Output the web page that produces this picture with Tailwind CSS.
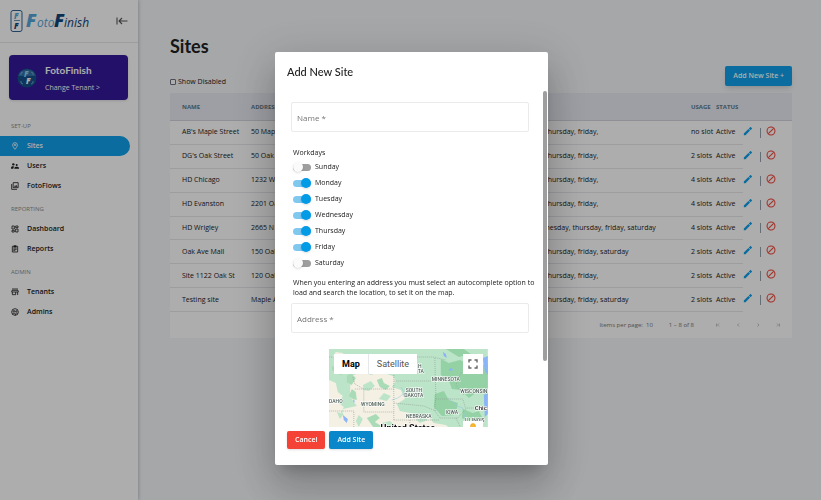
<!DOCTYPE html>
<html lang="en">
<head>
  <meta charset="UTF-8">
  <meta name="viewport" content="width=device-width, initial-scale=1">
  <title>FotoFinish - Sites</title>
  <script src="https://cdn.jsdelivr.net/npm/@tailwindcss/browser@4"></script>
</head>
<body class="min-h-screen flex bg-[#f3f6f9] font-['Open_Sans','Noto_Sans',sans-serif] text-[7px] leading-[10px] text-[#212121]">

  <!-- Sidebar -->
  <aside class="w-[138px] shrink-0 bg-white shadow-[0_0_4px_rgba(0,0,0,0.3)]">
    <header class="h-[43px] flex items-center justify-between pl-[10px] pr-[10px] border-b border-gray-200">
      <svg class="w-20 h-6" viewBox="0 0 80 24" aria-label="FotoFinish">
        <rect x="1" y="1.500" width="11" height="21" rx="2" fill="none" stroke="#2d6496" stroke-width="1"/>
        <g font-family="Open Sans" font-style="italic">
          <text x="4" y="10" font-size="8" font-weight="800" fill="#56a5d6">F</text>
          <text x="4" y="20" font-size="8" font-weight="800" fill="#12457a">F</text>
          <path d="M4 11.500h6" stroke="#2d6496" stroke-width=".7"/>
          <text x="16" y="18" font-size="18" font-weight="800" fill="#56a5d6">F</text>
          <text x="27" y="18" font-size="12" fill="#56a5d6">oto</text>
          <text x="44" y="18" font-size="18" font-weight="800" fill="#12457a">F</text>
          <text x="54" y="18" font-size="12" fill="#12457a">inish</text>
        </g>
      </svg>
      <button type="button" aria-label="Collapse menu">
        <svg class="w-3 h-3" viewBox="0 0 12 12" fill="none" stroke="#555" stroke-width="1.100"><path d="M1 2.500v7M11.500 6H3.500M6 3 3 6l3 3"/></svg>
      </button>
    </header>

    <section class="mt-3 mx-[9px] mr-[10px] h-[45px] flex items-center gap-2 pl-2 rounded-sm bg-[#34189a] text-white shadow-sm">
      <svg class="w-5 h-5" viewBox="0 0 20 20">
        <circle cx="10" cy="10" r="9.500" fill="#16508a"/>
        <path d="M1 8a9.500 9.500 0 0 1 18 0z" fill="#316fa5"/>
        <path d="M4 7V5l2-1M14 4l2 1v2M4 13v2l2 1M14 16l2-1v-2" stroke="#79b6d8" stroke-width=".8" fill="none"/>
        <g font-family="Open Sans" font-weight="800" font-style="italic" font-size="8">
          <text x="7" y="9" fill="#8ed0f2">F</text>
          <text x="9" y="16" fill="#fff">F</text>
        </g>
      </svg>
      <div>
        <h2 class="font-['Lato',sans-serif] text-[10px] leading-4 font-bold">FotoFinish</h2>
        <a href="#" class="block mt-1 leading-3 font-medium">Change Tenant &gt;</a>
      </div>
    </section>

    <nav class="pt-5">
      <h3 class="h-4 pl-[11px] pt-px text-[6px] text-[#8b8b8b]">SET-UP</h3>
      <a href="#" class="h-5 mr-2 pl-[11px] flex items-center gap-2 rounded-r-full bg-[#0f9fea] text-white font-semibold">
        <svg class="w-2 h-2" viewBox="0 0 24 24" fill="none" stroke="currentColor" stroke-width="2.500"><path d="M12 2a7 7 0 0 0-7 7c0 5 7 13 7 13s7-8 7-13a7 7 0 0 0-7-7z"/><circle cx="12" cy="9" r="2"/></svg>
        Sites
      </a>
      <a href="#" class="h-5 pl-[11px] flex items-center gap-2 font-semibold">
        <svg class="w-2 h-2" viewBox="0 0 24 24" fill="currentColor"><circle cx="7" cy="7" r="3.500"/><circle cx="17" cy="9" r="3"/><path d="M0 20v-3c0-3 4-4 7-4l3 1c-3 2-3 3-3 6zM10 20v-2c0-3 4-4 7-4s7 1 7 4v2z"/></svg>
        Users
      </a>
      <a href="#" class="h-5 pl-[11px] flex items-center gap-2 font-semibold">
        <svg class="w-2 h-2" viewBox="0 0 24 24" fill="none" stroke="currentColor" stroke-width="2.500"><path d="M2 6v16h16M6.500 2h15v15h-15z"/><path d="m9 14 3-4 2 2 2-3 4 5z" fill="currentColor" stroke="none"/></svg>
        FotoFlows
      </a>
      <h3 class="h-[23px] pl-[11px] pt-2 text-[6px] text-[#8b8b8b]">REPORTING</h3>
      <a href="#" class="h-5 pl-[11px] flex items-center gap-2 font-semibold">
        <svg class="w-2 h-2" viewBox="0 0 24 24" fill="none" stroke="currentColor" stroke-width="2.500"><path d="M3 3h7v9H3zM14 3h7v5h-7zM14 12h7v9h-7zM3 16h7v5H3z"/></svg>
        Dashboard
      </a>
      <a href="#" class="h-5 pl-[11px] flex items-center gap-2 font-semibold">
        <svg class="w-2 h-2" viewBox="0 0 24 24" fill="none" stroke="currentColor" stroke-width="2.500"><path d="M4 4h16v17H4zM7 9h10M7 13h10M7 17h6"/><path d="M8 1h8v6H8z" fill="currentColor" stroke="none"/></svg>
        Reports
      </a>
      <h3 class="h-[23px] pl-[11px] pt-2 text-[6px] text-[#8b8b8b]">ADMIN</h3>
      <a href="#" class="h-5 pl-[11px] flex items-center gap-2 font-semibold">
        <svg class="w-2 h-2" viewBox="0 0 24 24" fill="none" stroke="currentColor" stroke-width="2.500"><path d="M3 3h18M3 7h18l1 5H2zM4 12v8h10v-8M20 12v9"/></svg>
        Tenants
      </a>
      <a href="#" class="h-5 pl-[11px] flex items-center gap-2 font-semibold">
        <svg class="w-2 h-2" viewBox="0 0 24 24" fill="none" stroke="currentColor" stroke-width="2.500"><circle cx="12" cy="12" r="10"/><circle cx="9" cy="10" r="2.500"/><circle cx="16" cy="10" r="2"/><path d="M4 18c2-3 7-3 9 0v4M13 16c2-1 5-1 7 1"/></svg>
        Admins
      </a>
    </nav>
  </aside>

  <!-- Sites list -->
  <main class="flex-1 min-w-0 pl-8 pr-[29px] pt-[34px]">
    <h1 class="font-['Lato',sans-serif] text-[18px] leading-6 font-bold">Sites</h1>
    <div class="mt-2 flex items-end justify-between">
      <label class="flex items-center gap-[2px] leading-3 -mb-[2px]">
        <input type="checkbox" class="appearance-none w-[6px] h-[6px] rounded-[1px] border border-gray-500 bg-white">
        Show Disabled
      </label>
      <button type="button" class="h-5 px-2 rounded-xs bg-[#0f9fea] text-white font-semibold shadow-md">Add New Site +</button>
    </div>

    <div class="mt-[7px] bg-white pb-2">
      <table class="w-full h-[219px] table-fixed border-separate border-spacing-0 text-left whitespace-nowrap">
        <colgroup>
          <col class="w-[81px]"><col class="w-[194px]"><col><col class="w-[25px]"><col class="w-[27px]"><col class="w-[49px]">
        </colgroup>
        <thead class="bg-[#e8ebf3] text-[6px] text-[#5d7a89]">
          <tr class="h-7">
            <th class="pl-3 border-b border-gray-300">NAME</th>
            <th class="border-b border-gray-300">ADDRESS</th>
            <th class="border-b border-gray-300">WORKDAYS</th>
            <th class="border-b border-gray-300">USAGE</th>
            <th class="border-b border-gray-300">STATUS</th>
            <th class="border-b border-gray-300" aria-label="Actions"></th>
          </tr>
        </thead>
        <tbody id="sites"></tbody>
      </table>
      <footer class="mt-2 mr-[10px] flex items-center justify-end text-[6px] text-[#757575]">
        <span class="mr-4">Items per page: &nbsp;10</span>
        <span class="mr-5">1 – 8 of 8</span>
        <div class="flex gap-3 text-[#aaa]">
          <button type="button" aria-label="First page"><svg class="w-2 h-2" viewBox="0 0 8 8" fill="none" stroke="currentColor" stroke-width=".7"><path d="M2.500 2.500v3M5 2.500 3.500 4 5 5.500"/></svg></button>
          <button type="button" aria-label="Previous page"><svg class="w-2 h-2" viewBox="0 0 8 8" fill="none" stroke="currentColor" stroke-width=".7"><path d="M5 2.500 3.500 4 5 5.500"/></svg></button>
          <button type="button" aria-label="Next page"><svg class="w-2 h-2" viewBox="0 0 8 8" fill="none" stroke="currentColor" stroke-width=".7"><path d="M3.500 2.500 5 4 3.500 5.500"/></svg></button>
          <button type="button" aria-label="Last page"><svg class="w-2 h-2" viewBox="0 0 8 8" fill="none" stroke="currentColor" stroke-width=".7"><path d="M5.500 2.500v3M3 2.500 4.500 4 3 5.500"/></svg></button>
        </div>
      </footer>
    </div>
  </main>

  <!-- Dialog -->
  <div class="fixed inset-0 flex items-start justify-center pl-[2px] pt-[52px] bg-black/32">
    <form role="dialog" aria-labelledby="dialog-title" class="relative w-1/3 px-3 pt-3 pb-4 rounded-xs bg-white shadow-[0_11px_15px_-7px_rgba(0,0,0,0.2),0_24px_38px_3px_rgba(0,0,0,0.14),0_9px_46px_8px_rgba(0,0,0,0.12)]">
      <h2 id="dialog-title" class="font-['Lato',sans-serif] text-[11px] leading-4 font-medium">Add New Site</h2>

      <div class="mt-[10px] h-[337px] overflow-hidden pl-1 pr-[7px] pt-3">
        <input type="text" aria-label="Name" placeholder="Name *" class="w-full h-[30px] px-[5px] rounded-xs border border-[#ebebeb] text-[8px] placeholder:text-[#757575]">

        <fieldset class="mt-4 pl-[2px]">
          <legend class="mb-px">Workdays</legend>
          <div id="days"></div>
        </fieldset>

        <p class="mt-[7px] pl-[2px] -mr-[7px]">When you entering an address you must select an autocomplete option to load and search the location, to set it on the map.</p>

        <input type="text" aria-label="Address" placeholder="Address *" class="mt-[5px] w-full h-[30px] px-[5px] rounded-xs border border-[#ebebeb] text-[8px] placeholder:text-[#757575]">

        <div class="relative mt-4 ml-[16%] w-2/3 h-[100px] overflow-hidden font-['Roboto',sans-serif]">
          <svg class="w-full h-full" viewBox="0 0 159 100" preserveAspectRatio="xMidYMid slice">
            <rect width="159" height="100" fill="#bce4c8"/>
            <!-- dry plains -->
            <g fill="#f5f0e4">
              <path d="M22 27l12-4 8 3 10-3 12 4 3 5-4 6 9 3 4 9-8 5 3 7 15 3 13 2 6 7 12 2 10 8-6 16H58l-8-4-10 4-8-6-5-12-7-9 2-9 6-7-7-10z"/>
              <path d="M0 31l7 3 2 9 5 4-4 7 5 4-3 6 8 5 5 9-8 6-4 16H0z"/>
              <path d="M14 60l14-3 4 14-2 20H12z"/>
              <path d="M7 3l7 1 4 6-6 3-8-5z"/>
            </g>
            <!-- forest -->
            <g fill="#94d2a6">
              <path d="M112 10l8 4 11-3 15 6 13-2v31l-12-2-7 5-8-8-9-1-3-9-8-5z"/>
              <path d="M117 0h18l7 5-12 3zM106 45l9-3 5 9 9 3-2 12-14 1-8-9z"/>
              <path d="M134 60l10 4 6-2 4 8-11 4-10-5z"/>
            </g>
            <g fill="#a9dbb7">
              <path d="M24 50l-4-3 3-7 4 3 1 8zM48 31l5-2 2 5 6 3-4 4-6-3zM18 27l4-3 5 5-4 7-5-3zM3 17l5 2 8-3 4 6-8 4-9-5z"/>
              <path d="M38 69l9-4 4 4-5 4 8 5-9 1zM65 82l7-5 5 2-3 6z"/>
            </g>
            <g fill="#bce4c8">
              <path d="M34 36l8-4 4 5-6 5-5-1zM55 44l7 3-4 5-8-2zM8 63l7 2-4 5zM53 74l8-2 5 4-8 2zM30 66l4 4-4 8-3-6zM87 70l9-2 3 3-8 3z"/>
            </g>
            <!-- water -->
            <path d="M155 46l4-2v21l-3 3zM154 9l5-2v19l-3-4zM14 66l5 4-1 4-3-3zM142 12l3 1-1 2zM24 50l2 2-1 2zM114 3l3 2 1 4-3-2zM120 20l3-1 1 2-3 1z" fill="#8ab4f8"/>
            <path d="M63 51l6-2 7-5-4-6M120 49l8 8 6 2 2 10" fill="none" stroke="#8fc4e4" stroke-width=".5"/>
            <!-- state lines -->
            <g fill="none" stroke="#8d9b92" stroke-width=".6" stroke-dasharray="1 1">
              <path d="M0 8h104l13 3M65 8v63M65 32h41M24 28l2 7 9 5v23h30M26 40h39M65 54l30 3 12 5M106 9l1 36-1 17M107 50h27l3 10-8 9h-18l-5-7M135 46l-8-10 6-14M138 59h17M0 62h25v38M65 71h45M81 71v29M127 69l7 14"/>
            </g>
            <g font-size="5" fill="#4b5d55" stroke="#fff" stroke-width="1.200" paint-order="stroke" text-anchor="middle" font-weight="500">
              <text x="91" y="19">H</text>
              <text x="92" y="24">TA</text>
              <text x="117" y="32">MINNESOTA</text>
              <text x="85" y="43">SOUTH</text>
              <text x="85" y="48">DAKOTA</text>
              <text x="145" y="44">WISCONSIN</text>
              <text x="44" y="57">WYOMING</text>
              <text x="7" y="54">DAHO</text>
              <text x="90" y="69">NEBRASKA</text>
              <text x="123" y="65">IOWA</text>
              <text x="146" y="73">ILLINOIS</text>
              <text x="152" y="61" font-size="6" fill="#222">Chic</text>
              <text x="79" y="82" font-size="9" font-weight="700" fill="#111">United States</text>
            </g>
          </svg>
          <div class="absolute left-[5px] top-[5px] flex h-5 bg-white text-[9px]">
            <button type="button" class="px-2 font-bold text-black border-r border-gray-200">Map</button>
            <button type="button" class="px-2 text-[#565656]">Satellite</button>
          </div>
          <button type="button" aria-label="Full screen" class="absolute right-[5px] top-[5px] w-5 h-5 flex items-center justify-center bg-white">
            <svg class="w-[10px] h-[10px]" viewBox="0 0 10 10" fill="none" stroke="#666" stroke-width="1.400"><path d="M1 3.500V1h2.500M6.500 1H9v2.500M9 6.500V9H6.500M3.500 9H1V6.500"/></svg>
          </button>
          <button type="button" aria-label="Street View" class="absolute right-[5px] top-[72px] w-5 h-5 flex justify-center bg-white">
            <svg class="w-2 h-4 mt-px" viewBox="0 0 8 16" fill="#fbb829"><circle cx="4" cy="4" r="2.500" stroke="#d9941a" stroke-width=".5"/><path d="M1 7h6v5H1z"/></svg>
          </button>
        </div>
      </div>

      <div class="absolute right-px top-[39px] w-1 h-[270px] rounded-full bg-[#9e9e9e]"></div>

      <div class="mt-1 flex gap-1 text-white font-semibold">
        <button type="button" class="h-[18px] px-2 rounded-xs bg-[#f44336] shadow-sm">Cancel</button>
        <button type="submit" class="h-[18px] px-2 rounded-xs bg-[#0a87cb] shadow-sm">Add Site</button>
      </div>
    </form>
  </div>

  <script>
    const week = 'monday, tuesday, wednesday, thursday, friday,';
    const sites = [
      ["AB's Maple Street", '50 Maple Street', week, 'no slot'],
      ["DG's Oak Street", '50 Oak Street', week, '2 slots'],
      ['HD Chicago', '1232 W North Ave', week, '4 slots'],
      ['HD Evanston', '2201 Oakton St', week, '4 slots'],
      ['HD Wrigley', '2665 N Halsted St', 'sunday, ' + week + ' saturday', '4 slots'],
      ['Oak Ave Mall', '150 Oak Ave', week + ' saturday', '2 slots'],
      ['Site 1122 Oak St', '120 Oak St', week, '2 slots'],
      ['Testing site', 'Maple Ave', week + ' saturday', '2 slots'],
    ];

    document.getElementById('sites').innerHTML = sites.map(([name, address, workdays, usage]) => `
      <tr>
        <td class="pl-3 border-b border-gray-200">${name}</td>
        <td class="border-b border-gray-200">${address}</td>
        <td class="border-b border-gray-200">${workdays}</td>
        <td class="border-b border-gray-200">${usage}</td>
        <td class="border-b border-gray-200">Active</td>
        <td>
          <div class="flex items-center pb-1">
            <button type="button" aria-label="Edit ${name}">
              <svg class="w-[10px] h-[10px]" viewBox="0 0 24 24" fill="#0f9fea"><path d="M2 18v4h4L17 11l-4-4zM14 6l4 4 3-3c1-1 1-1 0-2l-2-2c-1-1-1-1-2 0z"/></svg>
            </button>
            <span class="ml-[7px] mr-[5px] mt-1 w-px h-[10px] bg-gray-400"></span>
            <button type="button" aria-label="Disable ${name}">
              <svg class="w-[10px] h-[10px]" viewBox="0 0 24 24" fill="none" stroke="#f44336" stroke-width="2.500"><circle cx="12" cy="12" r="9.500"/><path d="M5.500 18.500l13-13"/></svg>
            </button>
          </div>
        </td>
      </tr>`).join('');

    const days = ['Sunday', 'Monday', 'Tuesday', 'Wednesday', 'Thursday', 'Friday', 'Saturday'];
    document.getElementById('days').innerHTML = days.map((day, i) => `
      <label class="flex items-center gap-1 h-4">
        <input type="checkbox" ${i > 0 && i < 6 ? 'checked' : ''} class="appearance-none flex items-center w-[18px] h-[7px] rounded-full bg-[#9e9e9e] checked:bg-[#81c8f0] before:w-[10px] before:h-[10px] before:shrink-0 before:rounded-full before:bg-[#fafafa] before:shadow-sm checked:before:ml-2 checked:before:bg-[#039be5]">
        ${day}
      </label>`).join('');
  </script>
</body>
</html>
